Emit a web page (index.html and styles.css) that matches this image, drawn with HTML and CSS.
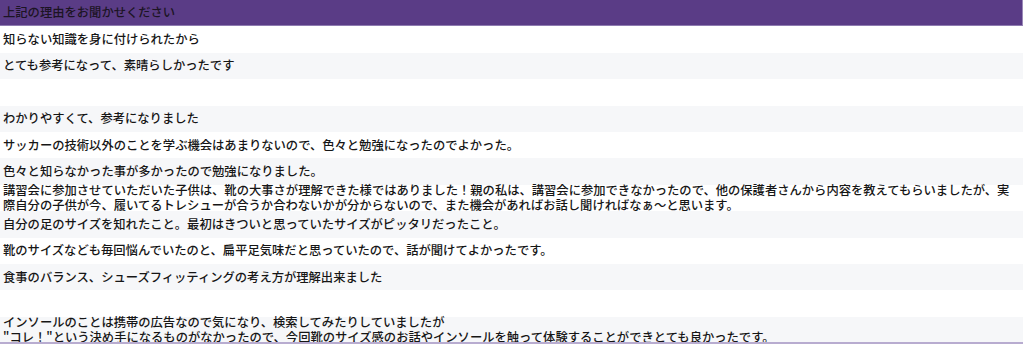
FILE: index.html
```html
<!DOCTYPE html>
<html lang="ja">
<head>
<meta charset="utf-8">
<title>上記の理由をお聞かせください</title>
<link rel="stylesheet" href="styles.css">
</head>
<body>
<div class="sheet">
  <div class="row head"><div class="cell">上記の理由をお聞かせください</div></div>
  <div class="row"><div class="cell">知らない知識を身に付けられたから</div></div>
  <div class="row alt"><div class="cell">とても参考になって、素晴らしかったです</div></div>
  <div class="row"><div class="cell"></div></div>
  <div class="row alt"><div class="cell">わかりやすくて、参考になりました</div></div>
  <div class="row"><div class="cell">サッカーの技術以外のことを学ぶ機会はあまりないので、色々と勉強になったのでよかった。</div></div>
  <div class="row alt"><div class="cell">色々と知らなかった事が多かったので勉強になりました。</div></div>
  <div class="row"><div class="cell">講習会に参加させていただいた子供は、靴の大事さが理解できた様ではありました！親の私は、講習会に参加できなかったので、他の保護者さんから内容を教えてもらいましたが、実際自分の子供が今、履いてるトレシューが合うか合わないかが分からないので、また機会があればお話し聞ければなぁ～と思います。</div></div>
  <div class="row alt"><div class="cell">自分の足のサイズを知れたこと。最初はきついと思っていたサイズがピッタリだったこと。</div></div>
  <div class="row"><div class="cell">靴のサイズなども毎回悩んでいたのと、扁平足気味だと思っていたので、話が聞けてよかったです。</div></div>
  <div class="row alt"><div class="cell">食事のバランス、シューズフィッティングの考え方が理解出来ました</div></div>
  <div class="row"><div class="cell"></div></div>
  <div class="row alt"><div class="cell">インソールのことは携帯の広告なので気になり、検索してみたりしていましたが<br>"コレ！"という決め手になるものがなかったので、今回靴のサイズ感のお話やインソールを触って体験することができとても良かったです。</div></div>
</div>
</body>
</html>
```
FILE: styles.css
```css
html, body {
  margin: 0;
  padding: 0;
  background: #ffffff;
}
body {
  font-family: "Noto Sans CJK JP", "Noto Sans", sans-serif;
  font-size: 12.3px;
  font-weight: 500;
  color: #161616;
}
.sheet {
  width: 1023px;
  height: 344px;
  overflow: hidden;
  box-sizing: border-box;
  border-bottom: 2px solid #b8acd0;
  display: flex;
  flex-direction: column;
}
.row {
  flex: 0 0 26.4px;
  height: 26.4px;
  display: flex;
  align-items: center;
  background: #ffffff;
}
.row.alt {
  background: #f6f7f9;
}
.row.head {
  background: #5a3c86;
  box-sizing: border-box;
  border-bottom: 1px solid #8e7bb0;
  border-right: 1px solid #9a89b8;
  color: #1c1424;
}
.cell {
  padding: 0 6px 0 3px;
  line-height: 15px;
  white-space: normal;
}
```
